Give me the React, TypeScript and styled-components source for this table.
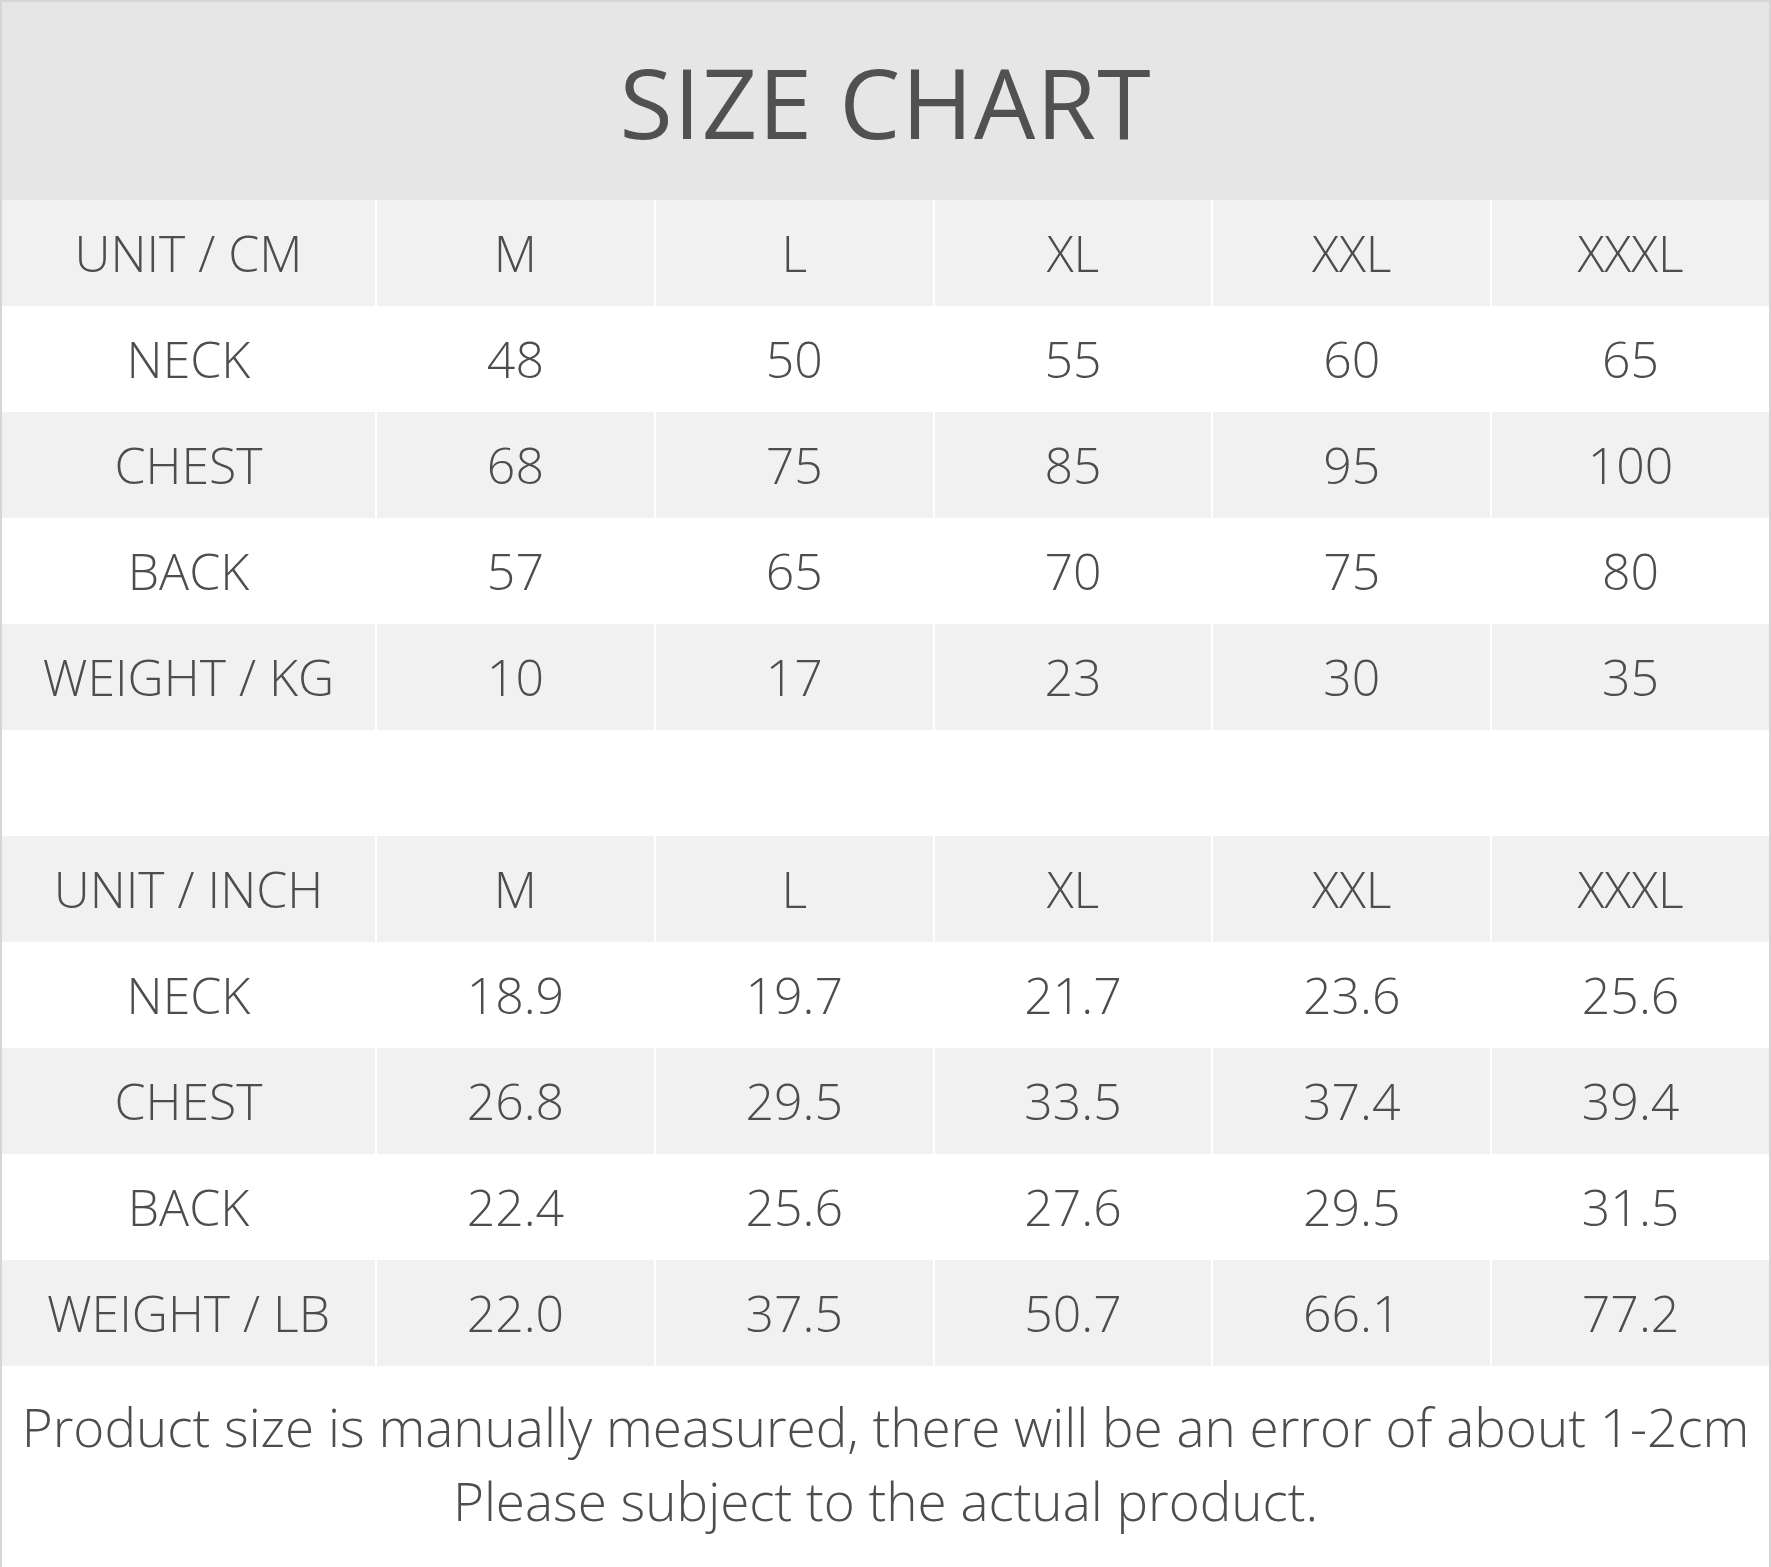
import styled, { createGlobalStyle } from "styled-components";

const GlobalStyle = createGlobalStyle`
  html, body {
    margin: 0;
    padding: 0;
    background: #ffffff;
  }
  body {
    font-family: "Open Sans", "Noto Sans", "Liberation Sans", sans-serif;
    font-weight: 300;
    color: #4f4f4f;
  }
`;

const Page = styled.div`
  width: 1771px;
  box-sizing: border-box;
  border-top: 2px solid #d6d6d6;
  border-left: 2px solid #d6d6d6;
  border-right: 2px solid #d6d6d6;
  display: flex;
  flex-direction: column;
`;

const TitleBand = styled.div`
  height: 198px;
  background: #e6e6e6;
  display: flex;
  align-items: center;
  justify-content: center;
  h1 {
    margin: 0;
    font-size: 97px;
    font-weight: 400;
    letter-spacing: 1px;
    color: #515151;
  }
`;

const Table = styled.div`
  display: grid;
  grid-template-columns: 373px repeat(5, 1fr);
  column-gap: 2px;
  background: #ffffff;
`;

const Cell = styled.div<{ $shade: boolean }>`
  height: 106px;
  display: flex;
  align-items: center;
  justify-content: center;
  background: ${p => (p.$shade ? "#f1f1f1" : "#ffffff")};
  font-size: 50px;
  font-weight: 300;
  color: #4d4d4d;
  white-space: nowrap;
`;

const Spacer = styled.div`
  height: 106px;
`;

const Footer = styled.div`
  height: 201px;
  display: flex;
  flex-direction: column;
  align-items: center;
  justify-content: flex-start;
  padding-top: 24px;
  box-sizing: border-box;
  font-size: 53px;
  line-height: 74px;
  font-weight: 300;
  color: #4d4d4d;
  text-align: center;
  white-space: nowrap;
`;

const sizes = ["M", "L", "XL", "XXL", "XXXL"];

const cmRows: [string, string[]][] = [
  ["NECK", ["48", "50", "55", "60", "65"]],
  ["CHEST", ["68", "75", "85", "95", "100"]],
  ["BACK", ["57", "65", "70", "75", "80"]],
  ["WEIGHT / KG", ["10", "17", "23", "30", "35"]],
];

const inchRows: [string, string[]][] = [
  ["NECK", ["18.9", "19.7", "21.7", "23.6", "25.6"]],
  ["CHEST", ["26.8", "29.5", "33.5", "37.4", "39.4"]],
  ["BACK", ["22.4", "25.6", "27.6", "29.5", "31.5"]],
  ["WEIGHT / LB", ["22.0", "37.5", "50.7", "66.1", "77.2"]],
];

const SizeTable = ({ unit, rows }: { unit: string; rows: [string, string[]][] }) => {
  const all: [string, string[]][] = [[unit, sizes], ...rows];
  return (
    <Table>
      {all.map(([label, values], i) => {
        const shade = i % 2 === 0;
        return [
          <Cell key={label + "-h"} $shade={shade}>
            {label}
          </Cell>,
          ...values.map((v, j) => (
            <Cell key={label + j} $shade={shade}>
              {v}
            </Cell>
          )),
        ];
      })}
    </Table>
  );
};

const App = () => {
  return (
    <>
      <GlobalStyle />
      <Page>
        <TitleBand>
          <h1>SIZE CHART</h1>
        </TitleBand>
        <SizeTable unit="UNIT / CM" rows={cmRows} />
        <Spacer />
        <SizeTable unit="UNIT / INCH" rows={inchRows} />
        <Footer>
          <span>Product size is manually measured, there will be an error of about 1-2cm</span>
          <span>Please subject to the actual product.</span>
        </Footer>
      </Page>
    </>
  );
};

export default App;
